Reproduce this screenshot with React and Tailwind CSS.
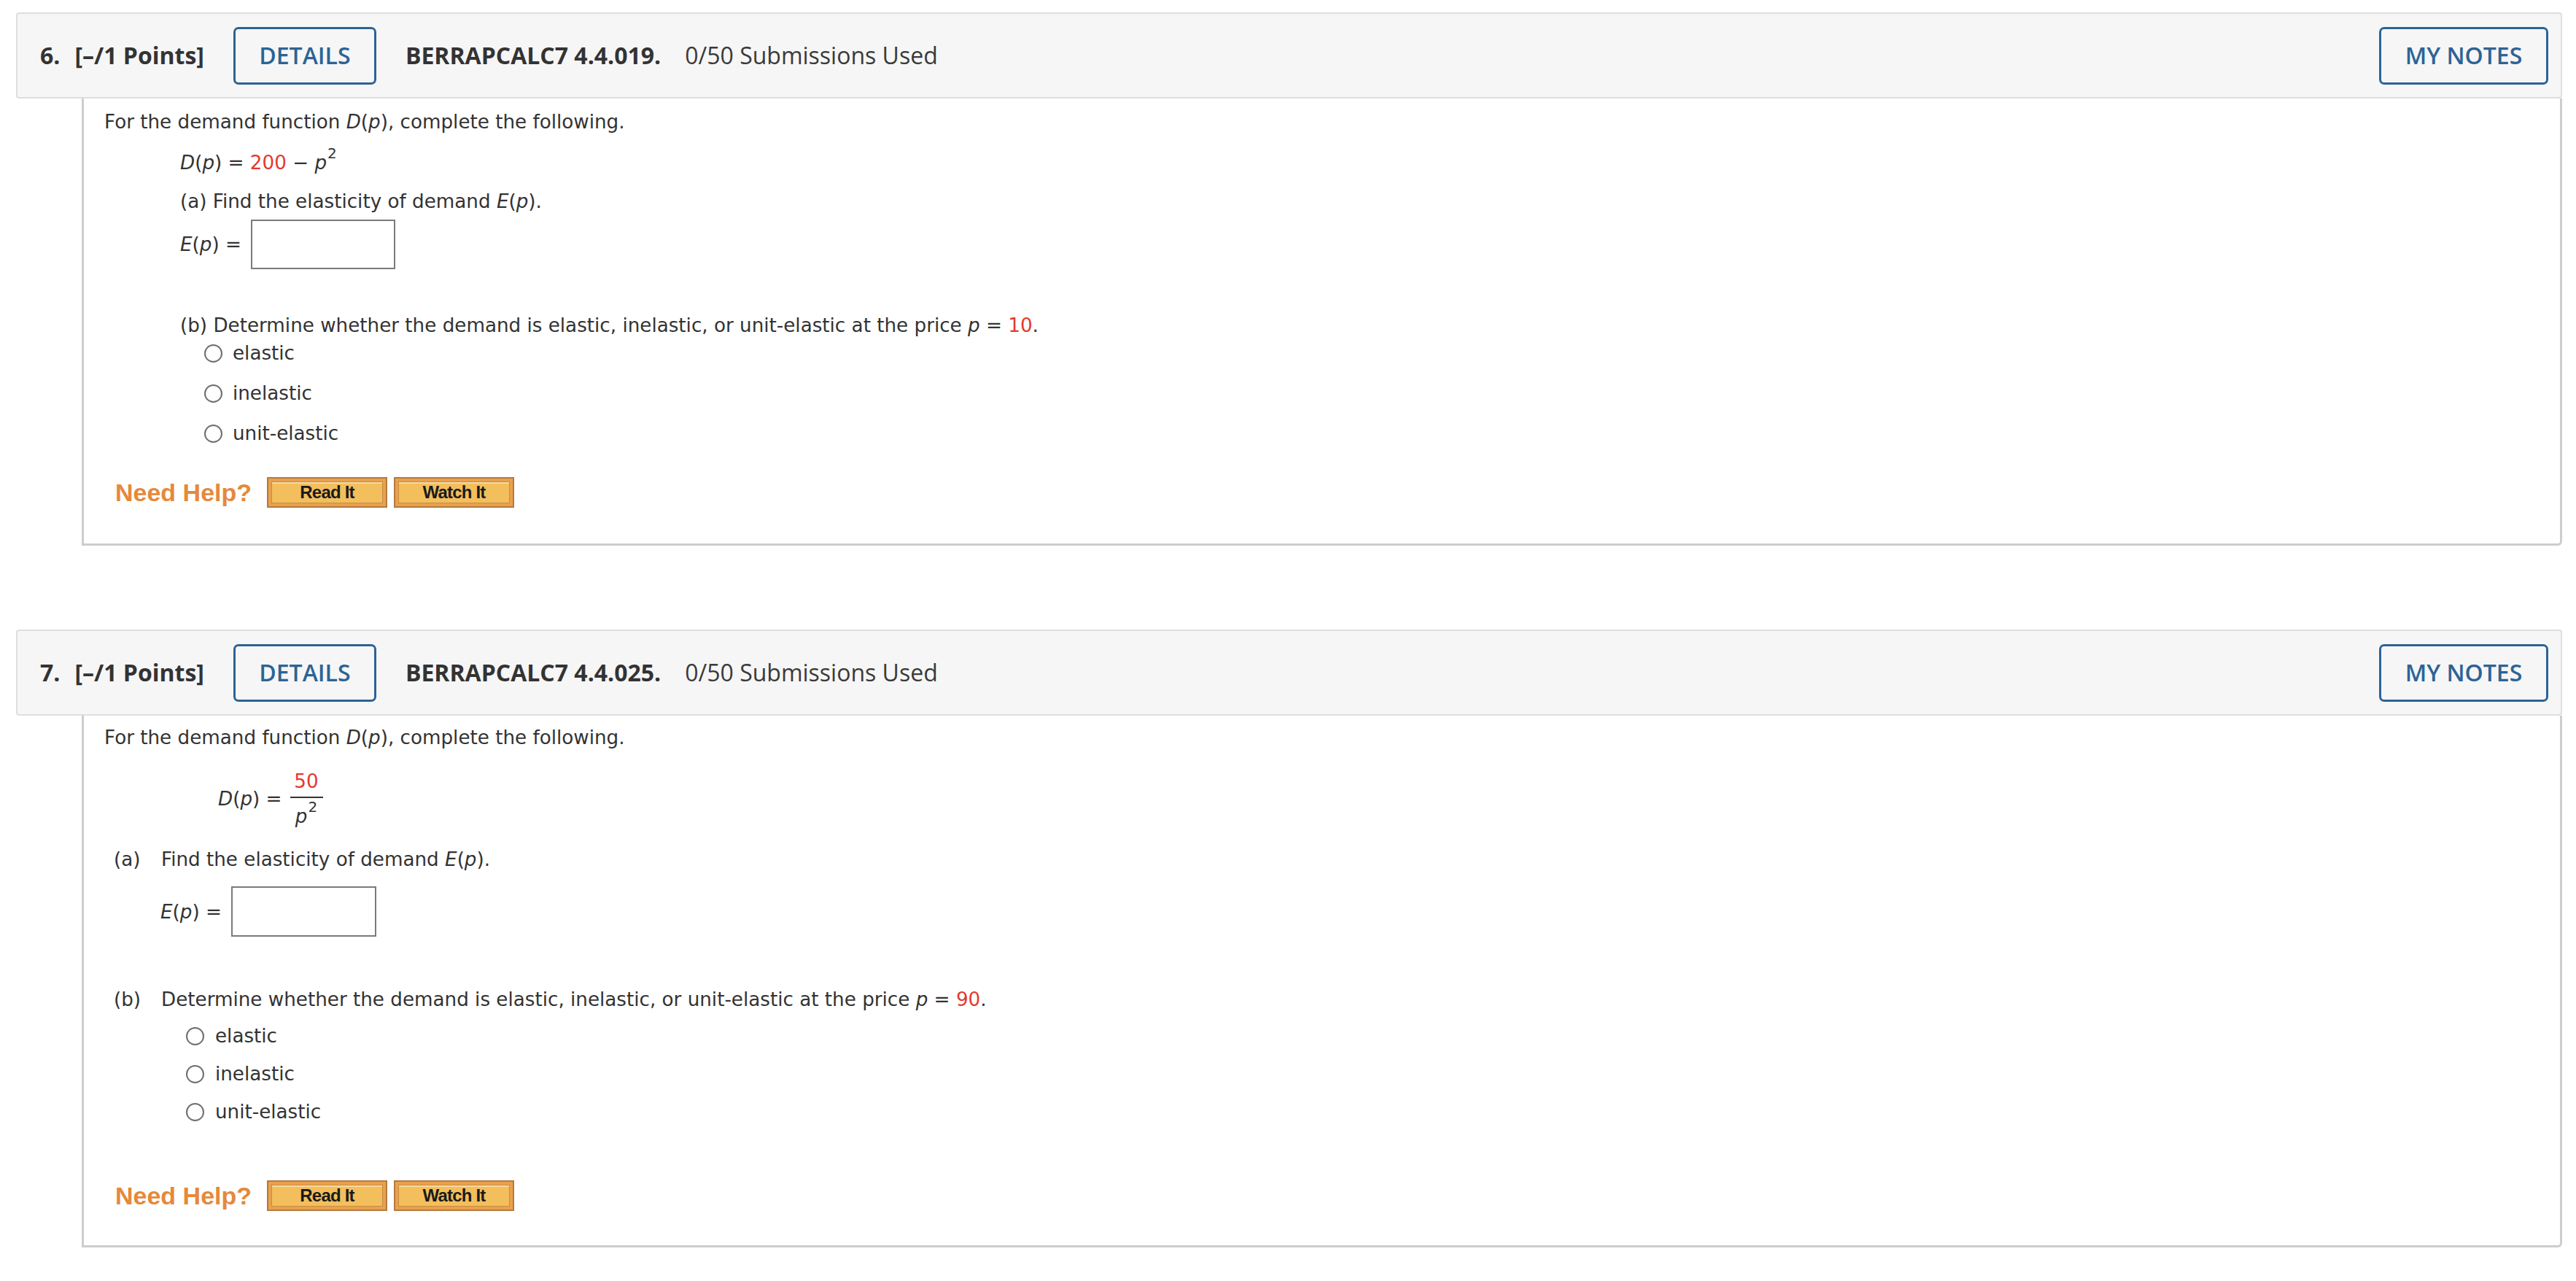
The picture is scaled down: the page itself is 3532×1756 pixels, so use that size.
import React from "react";

const Red = ({ children }) => <span className="text-[#e5392e]">{children}</span>;
const Sup = ({ children }) => (
  <span className="relative -top-[15px] text-[20px] leading-none ml-[1px]">{children}</span>
);

function Radio() {
  return <span className="inline-block w-[25px] h-[25px] rounded-full border-2 border-[#6e6e6e] bg-white shrink-0" />;
}

function Header({ num, code }) {
  return (
    <div className="flex items-center h-[118px] border-2 border-[#dedede] bg-[#f6f6f6] rounded-[4px] pl-[31px] pr-[17px] text-[32px] leading-none text-[#333] font-['Open_Sans',sans-serif]">
      <span className="font-bold">{num}.</span>
      <span className="font-bold ml-[20px]">[–/1 Points]</span>
      <button className="ml-[40px] w-[196px] h-[79px] border-[3px] border-[#2d6395] rounded-[7px] text-[#2d6395] font-semibold bg-transparent">
        DETAILS
      </button>
      <span className="font-bold ml-[40px]">BERRAPCALC7 {code}.</span>
      <span className="ml-[33px] text-[#3a3a3a]">0/50 Submissions Used</span>
      <button className="ml-auto w-[232px] h-[79px] border-[3px] border-[#2d6395] rounded-[7px] text-[#2d6395] font-semibold bg-transparent">
        MY NOTES
      </button>
    </div>
  );
}

function HelpButton({ label, className = "" }) {
  return (
    <div className={"w-[165px] h-[42px] border-2 border-[#b37a42] bg-[#e9a14c] p-[4px] flex " + className}>
      <div className="flex-1 flex items-center justify-center bg-[#f3bf5c] border border-[#c78b45] shadow-[inset_0_2px_0_#f8d9a0] font-['Liberation_Sans_Narrow','Liberation_Sans',sans-serif] font-bold text-[24px] leading-none text-[#1a1a1a] tracking-[-0.8px]">
        {label}
      </div>
    </div>
  );
}

function NeedHelp({ className = "" }) {
  return (
    <div className={"flex items-center ml-[15px] " + className}>
      <span className="font-['Liberation_Sans',sans-serif] font-bold text-[34px] leading-none text-[#e5893b]">Need Help?</span>
      <HelpButton label="Read It" className="ml-[21px]" />
      <HelpButton label="Watch It" className="ml-[9px]" />
    </div>
  );
}

const bodyCls =
  "ml-[90px] border-x-[3px] border-b-[3px] border-[#cdcdcd] rounded-br-[6px] pl-[28px] font-['DejaVu_Sans',sans-serif] text-[26.2px] leading-[36px] text-[#333]";

function Radios({ className, gap, textGap }) {
  return (
    <div className={"flex flex-col " + className} style={{ rowGap: gap }}>
      {["elastic", "inelastic", "unit-elastic"].map((t) => (
        <div key={t} className="flex items-center h-[36px]">
          <Radio />
          <span style={{ marginLeft: textGap }}>{t}</span>
        </div>
      ))}
    </div>
  );
}

export default function App() {
  return (
    <div className="min-h-[1756px] bg-white pl-[22px] pr-[19px] pt-[17px]">
      {/* Question 6 */}
      <Header num="6" code="4.4.019" />
      <div className={bodyCls + " pt-[14px] pb-[49px]"}>
        <p>
          For the demand function <i>D</i>(<i>p</i>), complete the following.
        </p>
        <div className="ml-[104px] mt-[20px]">
          <i>D</i>(<i>p</i>) = <Red>200</Red> − <i>p</i>
          <Sup>2</Sup>
        </div>
        <div className="ml-[104px] mt-[17px]">
          (a) Find the elasticity of demand <i>E</i>(<i>p</i>).
        </div>
        <div className="ml-[104px] mt-[7px] flex items-center">
          <span>
            <i>E</i>(<i>p</i>) =
          </span>
          <div className="ml-[13px] w-[198px] h-[68px] border-[2.5px] border-[#7a7a7a] bg-white" />
        </div>
        <div className="ml-[104px] mt-[59px]">
          (b) Determine whether the demand is elastic, inelastic, or unit-elastic at the price <i>p</i> = <Red>10</Red>.
        </div>
        <Radios className="ml-[137px] mt-[2px]" gap="19px" textGap="14px" />
        <NeedHelp className="mt-[42px]" />
      </div>

      {/* Question 7 */}
      <div className="mt-[115px]">
        <Header num="7" code="4.4.025" />
      </div>
      <div className={bodyCls + " pt-[12px] pb-[47px]"}>
        <p>
          For the demand function <i>D</i>(<i>p</i>), complete the following.
        </p>
        <div className="ml-[156px] mt-[27px] flex items-center">
          <span>
            <i>D</i>(<i>p</i>) =
          </span>
          <div className="ml-[11px] w-[45px] flex flex-col items-center">
            <span className="leading-[30px]">
              <Red>50</Red>
            </span>
            <span className="mt-[6px] h-[2px] w-full bg-[#333]" />
            <span className="mt-[10px] leading-[30px]">
              <i>p</i>
              <Sup>2</Sup>
            </span>
          </div>
        </div>
        <div className="ml-[13px] mt-[26px] flex">
          <span className="w-[65px] shrink-0">(a)</span>
          <span>
            Find the elasticity of demand <i>E</i>(<i>p</i>).
          </span>
        </div>
        <div className="ml-[77px] mt-[19px] flex items-center">
          <span>
            <i>E</i>(<i>p</i>) =
          </span>
          <div className="ml-[13px] w-[199px] h-[69px] border-[2.5px] border-[#7a7a7a] bg-white" />
        </div>
        <div className="ml-[13px] mt-[68px] flex">
          <span className="w-[65px] shrink-0">(b)</span>
          <span>
            Determine whether the demand is elastic, inelastic, or unit-elastic at the price <i>p</i> = <Red>90</Red>.
          </span>
        </div>
        <Radios className="ml-[112px] mt-[14px]" gap="16px" textGap="15px" />
        <NeedHelp className="mt-[76px]" />
      </div>
    </div>
  );
}
